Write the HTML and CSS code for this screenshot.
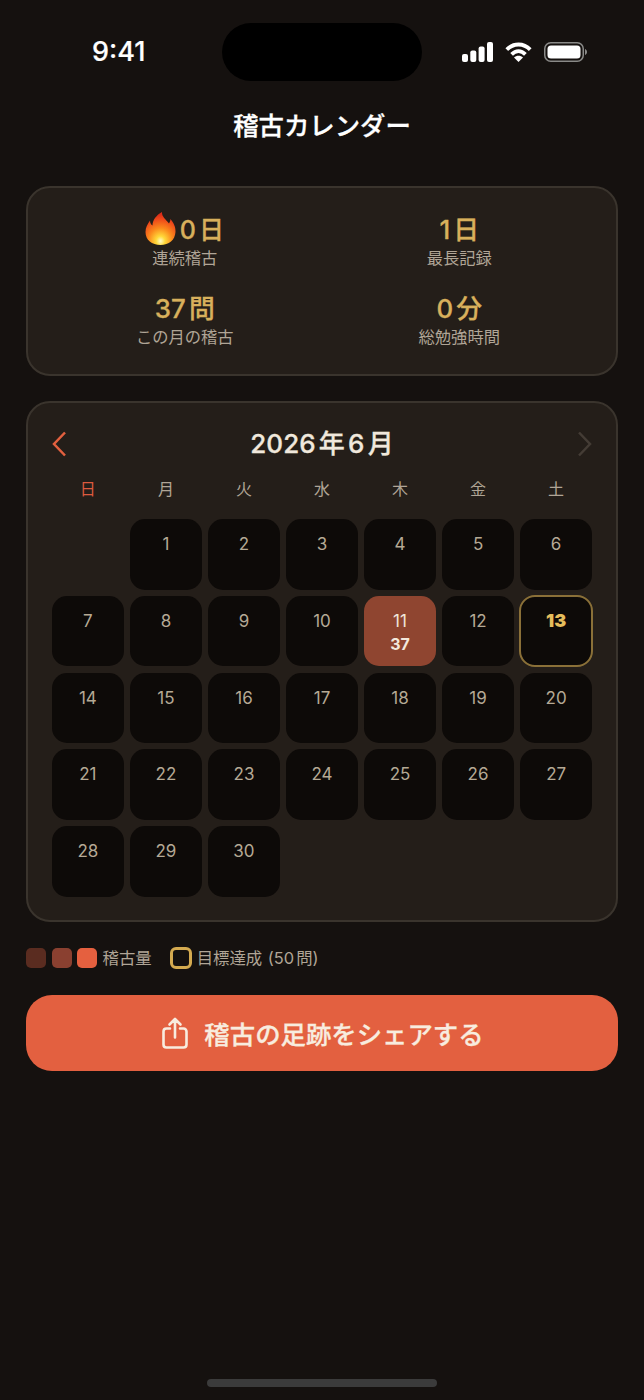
FILE: index.html
```html
<!DOCTYPE html>
<html lang="ja">
<head>
<meta charset="utf-8">
<title>稽古カレンダー</title>
<link rel="stylesheet" href="styles.css">
</head>
<body>
<div class="page">
  <div class="status">
    <div class="time">9:41</div>
    <div class="island"></div>
    <div class="sys">
      <svg class="sig" width="31" height="20" viewBox="0 0 31 20"><rect x="0" y="12" width="6" height="8" rx="2"/><rect x="8.3" y="8.5" width="6" height="11.500" rx="2"/><rect x="16.600" y="4.500" width="6" height="15.500" rx="2"/><rect x="25" y="0" width="6" height="20" rx="2"/></svg>
      <svg class="wifi" width="27" height="20" viewBox="0 0 27 20"><path d="M1.800 7.600C8.400 0.800 18.600 0.800 25.200 7.600" fill="none" stroke="#fff" stroke-width="3.800"/><path d="M6.600 12.300C10.800 8 16.200 8 20.400 12.300" fill="none" stroke="#fff" stroke-width="3.800"/><path d="M13.500 20L9 15.500C11.600 13.300 15.400 13.300 18 15.500Z" fill="#fff"/></svg>
      <svg class="batt" width="43" height="20" viewBox="0 0 43 20"><rect x="0.750" y="0.750" width="38.500" height="18.500" rx="6" fill="none" stroke="#8a8a88" stroke-width="1.500"/><rect x="3.500" y="3.500" width="33" height="13" rx="3.500" fill="#fff"/><path d="M41 7C42.300 7.500 43 8.600 43 10C43 11.400 42.300 12.500 41 13Z" fill="#8a8a88"/></svg>
    </div>
  </div>
  <h1 class="title">稽古カレンダー</h1>

  <section class="card stats">
    <div class="stat">
      <div class="val"><svg class="flame" width="31" height="35" viewBox="0 0 31 34"><defs><radialGradient id="fg" cx="0.500" cy="0.880" r="0.820"><stop offset="0" stop-color="#fffbc8"/><stop offset="0.180" stop-color="#ffd93a"/><stop offset="0.480" stop-color="#fb8a1c"/><stop offset="0.800" stop-color="#ee4a1a"/><stop offset="1" stop-color="#d92a18"/></radialGradient></defs><path d="M17 0.500C16.500 5 21 8 24 12C25 10.300 25.500 9 25.300 7.500C28.500 11 30.800 15.500 30.500 20.500C30 28.500 24 33.500 15.500 33.500C7 33.500 0.500 28.500 0.500 20.500C0.500 16 2.500 12.500 5 9C5 11.500 6 13 7.500 14C7.500 8.500 11.500 3.500 17 0.500Z" fill="url(#fg)"/></svg><span>0日</span></div>
      <div class="lbl">連続稽古</div>
    </div>
    <div class="stat">
      <div class="val">1日</div>
      <div class="lbl">最長記録</div>
    </div>
    <div class="stat">
      <div class="val">37問</div>
      <div class="lbl">この月の稽古</div>
    </div>
    <div class="stat">
      <div class="val">0分</div>
      <div class="lbl">総勉強時間</div>
    </div>
  </section>

  <section class="card cal">
    <div class="cal-head">
      <svg class="chev" width="15" height="26" viewBox="0 0 15 26"><path d="M13 1.500L2 13L13 24.500" fill="none" stroke="#e2603f" stroke-width="2.500"/></svg>
      <div class="month">2026年6月</div>
      <svg class="chev" width="15" height="26" viewBox="0 0 15 26"><path d="M2 1.500L13 13L2 24.500" fill="none" stroke="#443c35" stroke-width="2.500"/></svg>
    </div>
    <div class="weekdays">
      <div class="sun">日</div><div>月</div><div>火</div><div>水</div><div>木</div><div>金</div><div>土</div>
    </div>
    <div class="days">
      <div class="blank"></div>
      <div class="day">1</div><div class="day">2</div><div class="day">3</div><div class="day">4</div><div class="day">5</div><div class="day">6</div>
      <div class="day">7</div><div class="day">8</div><div class="day">9</div><div class="day">10</div>
      <div class="day active">11<span class="cnt">37</span></div>
      <div class="day">12</div>
      <div class="day today">13</div>
      <div class="day">14</div><div class="day">15</div><div class="day">16</div><div class="day">17</div><div class="day">18</div><div class="day">19</div><div class="day">20</div>
      <div class="day">21</div><div class="day">22</div><div class="day">23</div><div class="day">24</div><div class="day">25</div><div class="day">26</div><div class="day">27</div>
      <div class="day">28</div><div class="day">29</div><div class="day">30</div>
    </div>
  </section>

  <div class="legend">
    <span class="sw s1"></span><span class="sw s2"></span><span class="sw s3"></span>
    <span class="ltext">稽古量</span>
    <span class="goal"></span>
    <span class="ltext">目標達成 (50問)</span>
  </div>

  <button class="share">
    <svg width="26" height="32" viewBox="0 0 26 32"><path d="M8 11.500H4.500C2.800 11.500 1.500 12.800 1.500 14.500V27.500C1.500 29.200 2.800 30.500 4.500 30.500H21.500C23.200 30.500 24.500 29.200 24.500 27.500V14.500C24.500 12.800 23.200 11.500 21.500 11.500H18M13 20.500V2.500M7.500 7.500L13 2L18.500 7.500" fill="none" stroke="#f8ecdf" stroke-width="2.600" stroke-linecap="round" stroke-linejoin="round"/></svg>
    <span>稽古の足跡をシェアする</span>
  </button>

  <div class="home"></div>
</div>
</body>
</html>
```
FILE: styles.css
```css
* { box-sizing: border-box; }
html, body { margin: 0; padding: 0; background: #15110f; }
body {
  font-family: Inter, "Noto Sans CJK JP", sans-serif;
  text-autospace: normal;
}
.page {
  width: 644px;
  height: 1400px;
  padding: 0 26px;
  display: flex;
  flex-direction: column;
  overflow: hidden;
}
.status {
  display: grid;
  grid-template-columns: 196px 200px 196px;
  height: 81px;
  padding-top: 23px;
  align-items: start;
}
.time {
  padding: 12px 0 0 66px;
  font-size: 27px;
  line-height: 34px;
  font-weight: 500;
  color: #fff;
  -webkit-text-stroke: 0.2px #fff;
}
.island { height: 58px; background: #000; border-radius: 29px; }
.sys { display: flex; padding: 19px 0 0 40px; align-items: flex-start; }
.sig { fill: #fff; }
.wifi { margin-left: 12px; }
.batt { margin-left: 12px; }
.title {
  margin: 27px 0 42px;
  font-size: 25.400px;
  line-height: 36px;
  font-weight: 500;
  color: #fff;
  text-align: center;
  -webkit-text-stroke: 0.3px #fff;
}
.card {
  background: #241e19;
  border: 2px solid #3a342d;
  border-radius: 24px;
}
.stats {
  height: 190px;
  padding: 22.500px 19.500px 0;
  display: grid;
  grid-template-columns: 1fr 1fr;
  grid-auto-rows: 79px;
}
.stat { text-align: center; }
.val {
  display: flex;
  justify-content: center;
  align-items: center;
  height: 38px;
  font-size: 25.800px;
  line-height: 38px;
  font-weight: 500;
  color: #d8b05c;
  -webkit-text-stroke: 0.3px #d8b05c;
}
.val span { margin-left: 3.500px; font-size: 25px; }
.flame { margin-top: -2px; }
.lbl {
  margin-top: -1.500px;
  font-size: 16.300px;
  line-height: 22px;
  color: #b0a596;
}
.cal {
  margin-top: 25px;
  height: 521px;
  padding: 0 24px;
}
.cal-head {
  display: flex;
  justify-content: space-between;
  align-items: center;
  height: 81px;
}
.month {
  font-size: 26px;
  line-height: 38px;
  font-weight: 500;
  color: #f0e8dc;
  -webkit-text-stroke: 0.3px #f0e8dc;
}
.weekdays, .days {
  display: grid;
  grid-template-columns: repeat(7, 1fr);
  column-gap: 6.300px;
}
.weekdays {
  height: 24px;
  margin-top: -7px;
  font-size: 16px;
  line-height: 24px;
  text-align: center;
  color: #b0a596;
}
.sun { color: #dc5a3f; }
.days {
  margin-top: 18px;
  grid-auto-rows: 70.500px;
  row-gap: 6.300px;
}
.day {
  display: flex;
  flex-direction: column;
  align-items: center;
  padding-top: 13px;
  background: #0d0a08;
  border-radius: 15px;
  font-size: 17px;
  line-height: 24px;
  color: #b5a995;
}
.cnt {
  font-size: 16px;
  line-height: 22px;
  font-weight: 700;
  color: #f3e8dc;
}
.active { background: #8f4530; color: #f0e6da; }
.today {
  outline: 2px solid #8a7038;
  outline-offset: -1px;
  font-size: 18px;
  font-weight: 900;
  color: #e5bd5c;
}
.legend {
  display: flex;
  align-items: center;
  height: 24px;
  margin-top: 24px;
}
.sw { width: 20px; height: 20px; border-radius: 5px; margin-right: 5.500px; }
.s1 { background: #5a2c20; }
.s2 { background: #8a4030; }
.s3 { background: #e5603f; }
.ltext { font-size: 16.400px; line-height: 24px; color: #b0a596; word-spacing: 1px; }
.goal {
  width: 22px;
  height: 22px;
  margin: 0 5px 0 18px;
  border: 3px solid #d4aa50;
  border-radius: 6px;
}
.share {
  display: flex;
  justify-content: center;
  align-items: center;
  gap: 16px;
  width: 100%;
  height: 76px;
  margin-top: 25px;
  padding: 0 0 0 2px;
  border: 0;
  border-radius: 26px;
  background: #e36040;
  font-family: inherit;
  font-size: 25.400px;
  font-weight: 500;
  color: #f8ecdf;
  -webkit-text-stroke: 0.3px #f8ecdf;
}
.home {
  width: 230px;
  height: 8px;
  margin: auto auto 13px;
  border-radius: 4px;
  background: #3b3b3b;
}
```
